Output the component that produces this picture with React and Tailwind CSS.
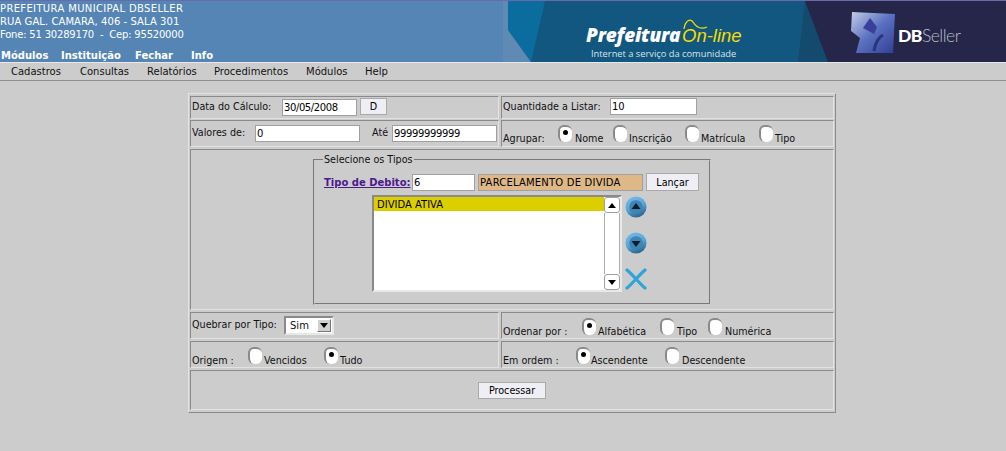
import React from 'react';

function Radio({ checked }) {
    return (
        <span className="relative block w-[14px] h-[17px] shrink-0 bg-white rounded-[6px] border-l-2 border-t-2 border-[#8a8a8a]">
            {checked && <span className="absolute left-[3px] top-[3px] w-[5px] h-[5px] rounded-full bg-black" />}
        </span>
    );
}

function RadioItem({ label, checked, w, gap }) {
    return (
        <div className={`flex items-start ${w}`}>
            <Radio checked={checked} />
            <span className={`mt-[7px] leading-[13px] whitespace-nowrap ${gap}`}>{label}</span>
        </div>
    );
}

function Field({ value, className = '', bg = 'bg-white' }) {
    return (
        <input
            readOnly
            value={value}
            className={`h-[17px] px-[1px] border border-[#a0a0a0] text-black text-[10px] leading-[15px] font-['DejaVu_Sans',sans-serif] outline-none ${bg} ${className}`}
        />
    );
}

function Btn({ children, className = '' }) {
    return (
        <button type="button" className={`h-[17px] border border-[#aaaaaa] bg-[#eeeef4] text-black text-[9.6px] leading-[15px] font-['DejaVu_Sans',sans-serif] ${className}`}>
            {children}
        </button>
    );
}

function Cell({ children, className = '' }) {
    return (
        <div className={`border border-t-[#8a8a8a] border-l-[#8a8a8a] border-r-[#e2e2e2] border-b-[#e2e2e2] min-w-0 ${className}`}>
            {children}
        </div>
    );
}

function RoundArrow({ up }) {
    const id = up ? 'gu' : 'gd';
    return (
        <svg width="22" height="22" viewBox="0 0 22 22">
            <defs>
                <linearGradient id={id} x1="0" y1="0" x2="0.4" y2="1">
                    <stop offset="0%" stopColor="#74bdea" />
                    <stop offset="60%" stopColor="#58a6d8" />
                    <stop offset="100%" stopColor="#2f6d96" />
                </linearGradient>
            </defs>
            <circle cx="11" cy="11" r="10.5" fill={`url(#${id})`} />
            <circle cx="11" cy="11" r="6.8" fill="#3f84b2" />
            {up
                ? <path d="M11 7 L15.5 13 L6.5 13 Z" fill="#0f1e2a" />
                : <path d="M6.5 9 L15.5 9 L11 15 Z" fill="#0f1e2a" />}
        </svg>
    );
}

function ScrollBtn({ up }) {
    return (
        <div className="w-[16px] h-[16px] shrink-0 bg-white border border-[#a0a0a0] rounded-[3px] flex items-center justify-center">
            <svg width="8" height="5" viewBox="0 0 8 5">
                {up ? <path d="M4 0 L8 5 L0 5 Z" fill="#000" /> : <path d="M0 0 L8 0 L4 5 Z" fill="#000" />}
            </svg>
        </div>
    );
}

export default function App() {
    return (
        <main className="w-[1006px] h-[451px] overflow-hidden bg-[#cccccc] text-[#111] text-[9.6px] font-['DejaVu_Sans',sans-serif]">
            <header className="flex h-[62px] bg-[#5585b5] border-t border-[#6a6aa8]">
                <div className="w-[503px] text-white">
                    <div className="pt-[1px] text-[10px] leading-[13px] h-[48px] whitespace-pre">
                        <p className="tracking-[0.35px]">PREFEITURA MUNICIPAL DBSELLER</p>
                        <p className="tracking-[0.07px]">RUA GAL. CAMARA, 406 - SALA 301</p>
                        <p className="tracking-[-0.2px]">{'Fone: 51 30289170  -  Cep: 95520000'}</p>
                    </div>
                    <nav className="flex text-[10px] font-bold leading-[13px]">
                        <span className="w-[61px] pl-[1px]">Módulos</span>
                        <span className="w-[74px]">Instituição</span>
                        <span className="w-[56px]">Fechar</span>
                        <span>Info</span>
                    </nav>
                </div>
                <div className="relative flex-1 overflow-hidden">
                    <svg className="absolute inset-0" width="503" height="61" viewBox="0 0 503 61">
                        <defs>
                            <linearGradient id="cube" x1="0" y1="0" x2="1" y2="1">
                                <stop offset="0%" stopColor="#c4cee8" />
                                <stop offset="50%" stopColor="#5a70c0" />
                                <stop offset="100%" stopColor="#2f3f92" />
                            </linearGradient>
                        </defs>
                        <rect width="503" height="61" fill="#25264a" />
                        <polygon points="0,0 302,0 325,61 0,61" fill="#134a6e" />
                        <polygon points="0,0 302,0 295,61 28,61" fill="#12577f" />
                        <polygon points="5,0 42,0 28,61 5,29" fill="#0a6d9e" />
                        <polygon points="0,0 5,0 5,29 28,61 0,61" fill="#5f8ab4" />
                        <path d="M181 28 C 182 20, 187 17, 190 21 C 193 26, 197 29, 204 26" fill="none" stroke="#f5dc00" strokeWidth="1.3" />
                        <polygon points="349,11 392,13 390,52 353,52 357,37 348,30" fill="url(#cube)" />
                        <polygon points="360,27 367,17 374,26 371,33" fill="#3a3f9c" />
                        <path d="M371 50 C 372 42, 376 36, 380 34" fill="none" stroke="#27357e" strokeWidth="3" />
                    </svg>
                    <div className="absolute left-[83px] top-[25px] flex items-baseline whitespace-nowrap italic">
                        <span className="w-[96px] text-[19px] leading-[18px] tracking-[-0.2px] font-extrabold text-white font-['Open_Sans',sans-serif]">Prefeitura</span>
                        <span className="text-[18.5px] leading-[18px] text-[#f5dc00] font-['Liberation_Sans',sans-serif]">On-line</span>
                    </div>
                    <p className="absolute left-[88px] top-[47px] text-[9.3px] leading-[12px] text-[#d8e4ec] whitespace-nowrap font-['Open_Sans',sans-serif]">Internet a serviço da comunidade</p>
                    <p className="absolute left-[395px] top-[25px] text-[17.5px] leading-[20px] tracking-[-0.5px] whitespace-nowrap font-['Lato',sans-serif]">
                        <span className="font-black text-white">DB</span><span className="font-light text-[#b9bbc9]">Seller</span>
                    </p>
                </div>
            </header>

            <div className="flex items-center h-[19px] border-t border-t-[#e8e8e8] border-b border-b-[#8f8f8f] text-[10px] leading-[14px] text-[#111] pl-[11px]">
                <span className="w-[69px]">Cadastros</span>
                <span className="w-[67px]">Consultas</span>
                <span className="w-[67px]">Relatórios</span>
                <span className="w-[92px]">Procedimentos</span>
                <span className="w-[59px]">Módulos</span>
                <span>Help</span>
            </div>

            <form className="mt-[12px] ml-[188px] w-[648px] h-[320px] border border-t-[#e2e2e2] border-l-[#e2e2e2] border-r-[#8a8a8a] border-b-[#8a8a8a] px-[1px] py-[2px] flex flex-col gap-[2px]">
                <div className="flex gap-[2px] h-[23px] shrink-0">
                    <Cell className="w-[309px] flex items-center">
                        <span className="ml-[1px] w-[90px]">Data do Cálculo:</span>
                        <Field value="30/05/2008" className="w-[75px] tracking-[-0.4px]" />
                        <Btn className="ml-[3px] w-[27px] -mt-[2px]">D</Btn>
                    </Cell>
                    <Cell className="flex-1 flex items-center">
                        <span className="ml-[1px] w-[107px]">Quantidade a Listar:</span>
                        <Field value="10" className="w-[87px] -mt-[2px]" />
                    </Cell>
                </div>
                <div className="flex gap-[2px] h-[27px] shrink-0 -mt-[1px]">
                    <Cell className="w-[309px] flex items-center">
                        <span className="ml-[1px] w-[63px]">Valores de:</span>
                        <Field value="0" className="w-[105px]" />
                        <span className="ml-[12px] w-[20px]">Até</span>
                        <Field value="99999999999" className="w-[105px] tracking-[-0.35px]" />
                    </Cell>
                    <Cell className="flex-1 flex items-start pt-[4px]">
                        <span className="ml-[1px] mt-[7px] leading-[13px] w-[55px]">Agrupar:</span>
                        <RadioItem label="Nome" checked w="w-[55px]" gap="ml-[3px]" />
                        <RadioItem label="Inscrição" w="w-[72px]" gap="ml-[2px]" />
                        <RadioItem label="Matrícula" w="w-[74px]" gap="ml-[2px]" />
                        <RadioItem label="Tipo" w="w-[40px]" gap="ml-[2px]" />
                    </Cell>
                </div>
                <Cell className="h-[161px] shrink-0 pt-[4px]">
                    <fieldset className="ml-[122px] w-[398px] h-[151px] border-2 [border-style:groove] border-[#cccccc] px-[8px]">
                        <legend className="px-[1px] leading-[12px]">Selecione os Tipos</legend>
                        <div className="flex items-center mt-[7px] h-[18px] ml-[1px]">
                            <a className="w-[88px] font-bold text-[10px] text-[#4b1a8e] underline whitespace-nowrap">Tipo de Debito:</a>
                            <Field value="6" className="w-[63px]" />
                            <Field value="PARCELAMENTO DE DIVIDA" bg="bg-[#deb887]" className="ml-[3px] w-[165px] tracking-[0.2px]" />
                            <Btn className="ml-[3px] w-[53px] h-[18px]">Lançar</Btn>
                        </div>
                        <div className="flex mt-[4px] ml-[49px]">
                            <div className="w-[250px] h-[97px] bg-white border-2 border-t-[#8a8a8a] border-l-[#8a8a8a] border-r-[#e8e8e8] border-b-[#e8e8e8] flex">
                                <div className="flex-1">
                                    <div className="h-[14px] bg-[#dccf00] pl-[3px] text-[10px] leading-[15px] text-black">DIVIDA ATIVA</div>
                                </div>
                                <div className="w-[16px] flex flex-col justify-between bg-white">
                                    <ScrollBtn up />
                                    <div className="flex-1 border-x border-[#b0b0b0]" />
                                    <ScrollBtn />
                                </div>
                            </div>
                            <div className="ml-[3px] flex flex-col gap-[14px] pt-[1px]">
                                <RoundArrow up />
                                <RoundArrow />
                                <svg width="22" height="22" viewBox="0 0 22 22">
                                    <path d="M2 2 C 8 7, 14 15, 20 20 M20 2 C 14 7, 8 15, 2 20" fill="none" stroke="#2fa4d8" strokeWidth="3.2" strokeLinecap="round" />
                                </svg>
                            </div>
                        </div>
                    </fieldset>
                </Cell>
                <div className="flex gap-[2px] h-[27px] shrink-0">
                    <Cell className="w-[309px] flex items-center">
                        <span className="ml-[1px] w-[92px]">Quebrar por Tipo:</span>
                        <div className="w-[50px] h-[19px] bg-white border-2 border-t-[#8a8a8a] border-l-[#8a8a8a] border-r-[#e8e8e8] border-b-[#e8e8e8] flex items-center justify-between pl-[4px] pr-[1px]">
                            <span className="text-[10px]">Sim</span>
                            <span className="w-[14px] h-[13px] bg-[#d0d0d0] border border-t-white border-l-white border-r-[#777] border-b-[#777] flex items-center justify-center">
                                <svg width="8" height="5" viewBox="0 0 8 5"><path d="M0 0 L8 0 L4 5 Z" fill="#000" /></svg>
                            </span>
                        </div>
                    </Cell>
                    <Cell className="flex-1 flex items-start pt-[5px]">
                        <span className="ml-[1px] mt-[7px] leading-[13px] w-[79px]">Ordenar por :</span>
                        <RadioItem label="Alfabética" checked w="w-[78px]" gap="ml-[2px]" />
                        <RadioItem label="Tipo" w="w-[48px]" gap="ml-[3px]" />
                        <RadioItem label="Numérica" w="w-[70px]" gap="ml-[3px]" />
                    </Cell>
                </div>
                <div className="flex gap-[2px] h-[27px] shrink-0">
                    <Cell className="w-[309px] flex items-start pt-[5px]">
                        <span className="ml-[1px] mt-[7px] leading-[13px] w-[56px]">Origem :</span>
                        <RadioItem label="Vencidos" w="w-[76px]" gap="ml-[2px]" />
                        <RadioItem label="Tudo" checked w="w-[40px]" gap="ml-[2px]" />
                    </Cell>
                    <Cell className="flex-1 flex items-start pt-[5px]">
                        <span className="ml-[1px] mt-[7px] leading-[13px] w-[73px]">Em ordem :</span>
                        <RadioItem label="Ascendente" checked w="w-[89px]" gap="ml-[1px]" />
                        <RadioItem label="Descendente" w="w-[90px]" gap="ml-[3px]" />
                    </Cell>
                </div>
                <Cell className="flex-1 flex items-center justify-center">
                    <Btn className="w-[68px]">Processar</Btn>
                </Cell>
            </form>
        </main>
    );
}
